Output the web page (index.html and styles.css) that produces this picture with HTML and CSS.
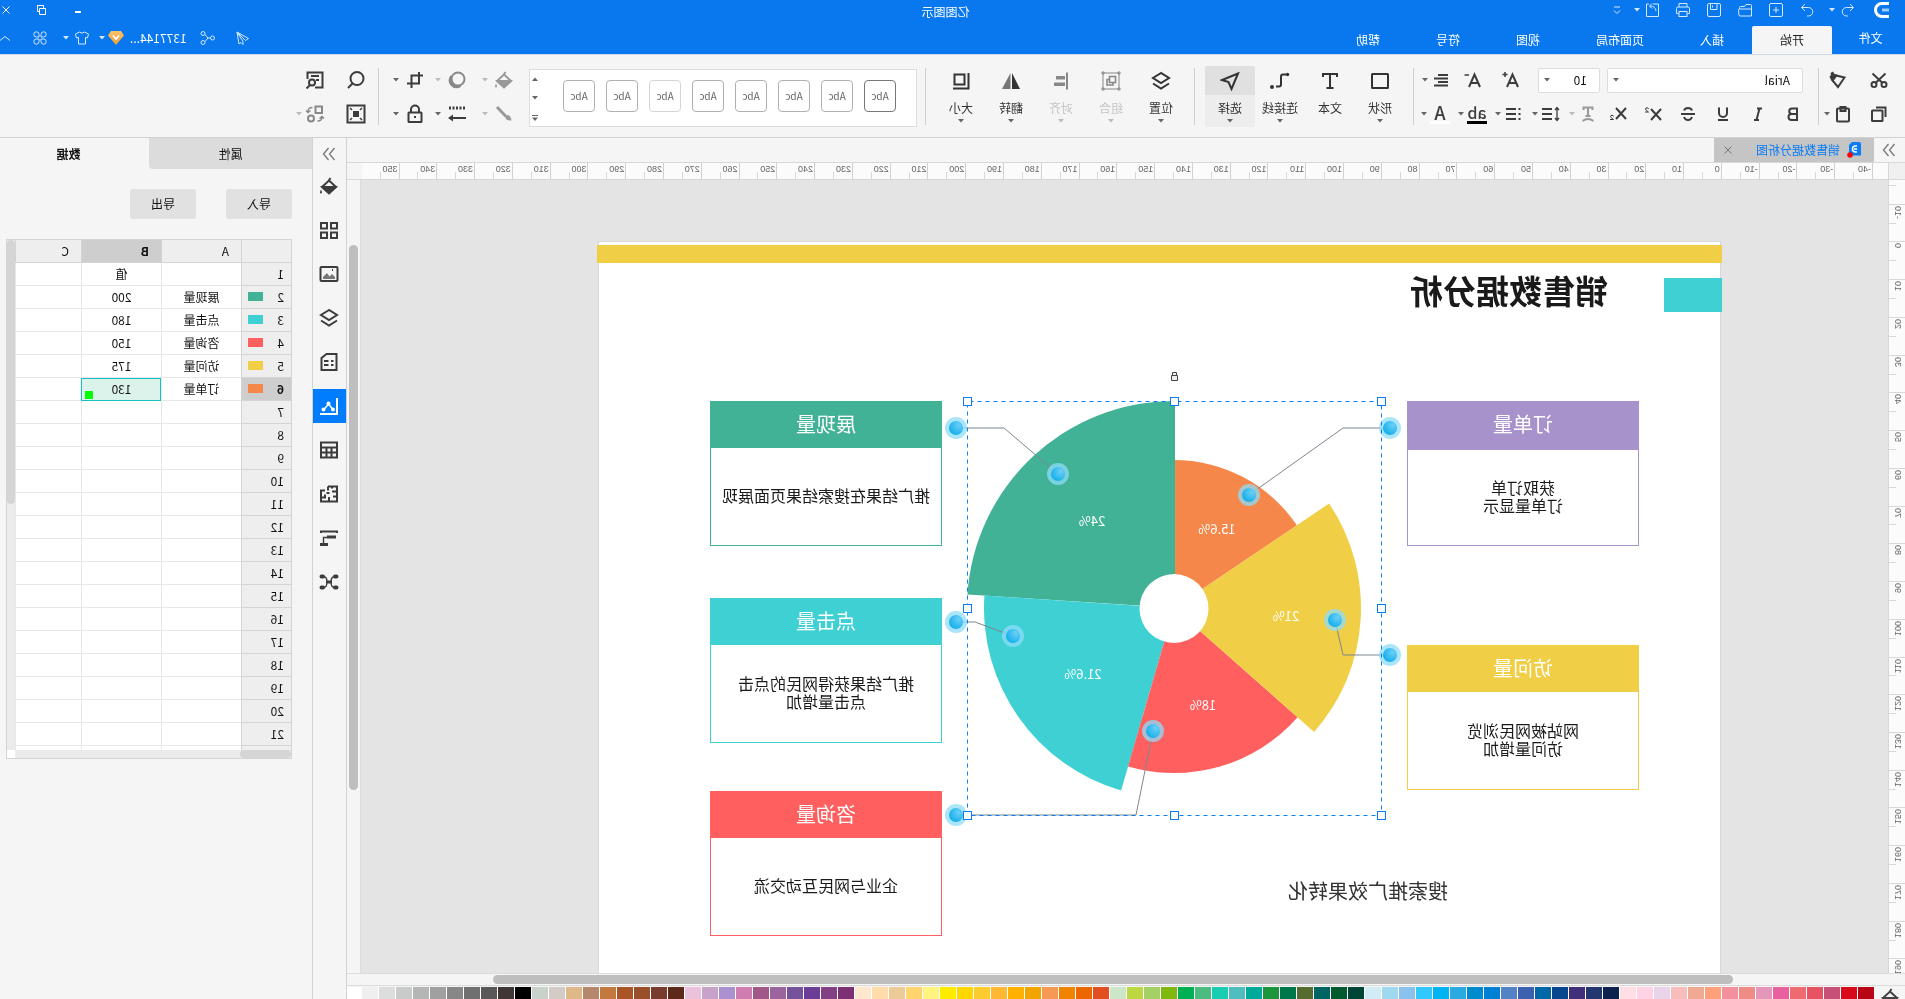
FILE: index.html
```html
<!DOCTYPE html>
<html lang="zh-CN">
<head>
<meta charset="utf-8">
<title>亿图图示</title>
<link rel="stylesheet" href="styles.css">
</head>
<body>
<svg class="defs" aria-hidden="true">
  <defs>
    <radialGradient id="dot" cx="0.3" cy="0.3" r="0.8"><stop offset="0" stop-color="#6ccff6"/><stop offset="1" stop-color="#0fadea"/></radialGradient>
    <linearGradient id="gem" x1="0" y1="0" x2="0" y2="1"><stop offset="0" stop-color="#fbc56a"/><stop offset="1" stop-color="#f29a2e"/></linearGradient>
  </defs>
  <symbol id="i-caret" viewBox="0 0 6 4"><path d="M0 0h6L3 3.6z" fill="currentColor"/></symbol>
  <symbol id="i-undo" viewBox="0 0 16 16"><path d="M6 2 2.500 5.500 6 9M3 5.500h6.500a4 4 0 0 1 0 8.500H8"/></symbol>
  <symbol id="i-redo" viewBox="0 0 16 16"><path d="M10 2l3.500 3.500L10 9M13 5.500H6.500a4 4 0 0 0 0 8.500H8"/></symbol>
  <symbol id="i-new" viewBox="0 0 16 16"><rect x="1.500" y="1.500" width="13" height="13" rx="1.500"/><path d="M8 5v6M5 8h6"/></symbol>
  <symbol id="i-open" viewBox="0 0 16 16"><path d="M1.500 14V3.500q0-1 1-1H7l1.500 2h4q1 0 1 1V7M1.500 14V8q0-1 1-1h11q1.300 0 1 1.200L14 13q-.3 1-1 1z"/></symbol>
  <symbol id="i-save" viewBox="0 0 16 16"><rect x="1.500" y="1.500" width="13" height="13" rx="1.500"/><path d="M5 1.500v6h6.500v-6M9.500 3.500v2"/></symbol>
  <symbol id="i-print" viewBox="0 0 16 16"><path d="M4 5V1.500h8V5M3.500 11.500h-2V6.500q0-1.500 1.500-1.500h10q1.500 0 1.500 1.500v5h-2"/><rect x="4" y="9.500" width="8" height="5"/></symbol>
  <symbol id="i-export" viewBox="0 0 16 16"><path d="M8 2H2.500v12.500h12V2H12M5 9q.5-5 6-5M9 1.500 11.500 4 9 6.500"/></symbol>
  <symbol id="i-more" viewBox="0 0 16 16"><path d="M5 5h6M5 8.500l3 3 3-3"/></symbol>
  <symbol id="i-send" viewBox="0 0 16 16"><path d="M14 2 2.500 8.500l3 2L14 2 8 11.500v3l2-2 2 1.500z"/></symbol>
  <symbol id="i-share" viewBox="0 0 16 16"><circle cx="3.500" cy="8" r="2"/><circle cx="13" cy="3.500" r="2"/><circle cx="13" cy="12.500" r="2"/><path d="M5.500 8H8l3-3.500M8 8l3 3.500"/></symbol>
  <symbol id="i-shirt" viewBox="0 0 16 16"><path d="M5.500 2 1.500 4l1 4 2-.7V14h7V7.300l2 .7 1-4-4-2q-2.500 2.500-5 0z"/></symbol>
  <symbol id="i-clover" viewBox="0 0 16 16"><path d="M7 7H4.200A2.600 2.600 0 1 1 7 4.300zM9 7V4.300A2.600 2.600 0 1 1 11.800 7zM7 9v2.700A2.600 2.600 0 1 1 4.200 9zM9 9h2.800A2.600 2.600 0 1 1 9 11.700z"/></symbol>
  <symbol id="i-up" viewBox="0 0 16 16"><path d="M3 10.500l5-4 5 4"/></symbol>
  <symbol id="i-min" viewBox="0 0 16 16"><path d="M5 10h6" stroke-width="2"/></symbol>
  <symbol id="i-restore" viewBox="0 0 16 16"><path d="M4.500 6.500h6v6h-6zM10.500 9.500h2v-6h-6v3"/></symbol>
  <symbol id="i-close" viewBox="0 0 16 16"><path d="M4.500 4.500l7 7M11.500 4.500l-7 7"/></symbol>
  <symbol id="i-cut" viewBox="0 0 20 20"><circle cx="5" cy="14.500" r="2.500"/><circle cx="15" cy="14.500" r="2.500"/><path d="M3.500 3.500l10 9.500M16.500 3.500 6.500 13"/></symbol>
  <symbol id="i-painter" viewBox="0 0 20 20"><path d="M3.500 7.500 12 5.500l3.500 5L10 17z"/><path d="M10 5l3.500-1 1.500-2.500 2.500 1.500-.5 2 1.500 1.500-1 2.500L15.500 12z" fill="currentColor" stroke="none"/></symbol>
  <symbol id="i-copy" viewBox="0 0 20 20"><rect x="6.500" y="6.500" width="10.500" height="10.500" rx=".5"/><path d="M3.500 13V3.500H13"/></symbol>
  <symbol id="i-paste" viewBox="0 0 20 20"><rect x="4" y="4.500" width="12" height="13" rx="1"/><path d="M7.500 3h5v4h-5z"/></symbol>
  <symbol id="i-fplus" viewBox="0 0 20 20"><path d="M3 17 8.500 4.500 14 17M5 13h7"/><path d="M13.500 4.500h5M16 2v5" stroke-width="1.500"/></symbol>
  <symbol id="i-fminus" viewBox="0 0 20 20"><path d="M3 17 8.500 4.500 14 17M5 13h7"/><path d="M14 5h4.500" stroke-width="1.500"/></symbol>
  <symbol id="i-align" viewBox="0 0 20 20"><path d="M3 5h10M3 8.500h14M3 12h10M3 15.500h14"/></symbol>
  <symbol id="i-b" viewBox="0 0 20 20"><path d="M6 4.500h5a2.500 2.500 0 0 1 0 5.500H6zM6 10h5.500a2.700 2.700 0 0 1 0 6H6z"/></symbol>
  <symbol id="i-i" viewBox="0 0 20 20"><path d="M6 4.500h5M9 16h5M8.500 4.500l3 11.500"/></symbol>
  <symbol id="i-u" viewBox="0 0 20 20"><path d="M6 3.500V9a4 4 0 0 0 8 0V3.500M5 16h10"/></symbol>
  <symbol id="i-s" viewBox="0 0 20 20"><path d="M14 6.500Q13 4 10 4T6 6.500M3 10h14M6 13q1 3 4 3t4-3"/></symbol>
  <symbol id="i-sup" viewBox="0 0 20 20"><path d="M2 5l10 11M12 5 2 16"/><path d="M14.500 5q0-1.200 1.500-1.200T17.500 5q0 1-3 3h3.500" stroke-width="1"/></symbol>
  <symbol id="i-sub" viewBox="0 0 20 20"><path d="M2 4l10 11M12 4 2 15"/><path d="M14.500 12.500q0-1.200 1.500-1.200t1.500 1.200q0 1-3 3h3.500" stroke-width="1"/></symbol>
  <symbol id="i-tarc" viewBox="0 0 20 20"><path d="M5.500 6V3.500h9V6M10 3.500V12M7.500 12h5M4.500 17q5.500-4 11 0"/></symbol>
  <symbol id="i-lines" viewBox="0 0 20 20"><path d="M9 5h10M9 10h10M9 15h10"/><path d="M4 4v12M2 6l2-2.500L6 6M2 14l2 2.500L6 14" stroke-width="1.300"/></symbol>
  <symbol id="i-list" viewBox="0 0 20 20"><path d="M8 5h10M8 10h10M8 15h10M3.500 5h2M3.500 10h2M3.500 15h2"/></symbol>
  <symbol id="i-rect" viewBox="0 0 20 20"><rect x="2" y="3" width="16" height="14" rx=".5"/></symbol>
  <symbol id="i-t" viewBox="0 0 20 20"><path d="M3 6V3h14v3M10 3v14M6.500 17h7"/></symbol>
  <symbol id="i-conn" viewBox="0 0 20 20"><path d="M4 3.500h3q2 0 2 2v8q0 2 2 2h3"/><circle cx="2.500" cy="3.500" r="1.700" fill="currentColor" stroke="none"/><circle cx="18" cy="16" r="2" fill="currentColor" stroke="none"/></symbol>
  <symbol id="i-select" viewBox="0 0 20 20"><path d="M2 2.500 18 9l-6.500 2L8.500 18z"/></symbol>
  <symbol id="i-layers" viewBox="0 0 20 20"><path d="M10 2l8 5-8 5-8-5zM2 12.500l8 5 8-5" /></symbol>
  <symbol id="i-group" viewBox="0 0 20 20"><rect x="2" y="2" width="16" height="16" stroke-width="1"/><path d="M5.500 5.500h6v6h-6zM11.500 8.500H14V14H8v-2.500" stroke-width="1.600"/><path d="M1 1h2v2H1zM17 1h2v2h-2zM1 17h2v2H1zM17 17h2v2h-2z" stroke-width="1"/></symbol>
  <symbol id="i-left" viewBox="0 0 20 20"><path d="M4 1.500v17"/><path d="M6 5h9v3.500H6zM6 11.500h11V15H6z" fill="currentColor" stroke="none"/></symbol>
  <symbol id="i-flip" viewBox="0 0 20 20"><path d="M9 2v16H1z" fill="currentColor" stroke="none"/><path d="M10.500 2v16H19z" fill="#777" stroke="none"/></symbol>
  <symbol id="i-size" viewBox="0 0 20 20"><rect x="6.500" y="3.500" width="10" height="10"/><path d="M2.500 2v15.500H18"/></symbol>
  <symbol id="i-bucket" viewBox="0 0 20 20"><path d="M8.500 2l2 3M10 4.500 3 11l7 6.500 7-6.500z"/><path d="M3.500 11h13L10 17z" fill="currentColor"/><path d="M18 13.500q2 4 0 4t0-4z" fill="currentColor" stroke="none"/></symbol>
  <symbol id="i-brush" viewBox="0 0 20 20"><path d="M17 3l-9 9.500" stroke-width="3"/><path d="M8.500 12 6 11q-3 1-3.500 5.500 4.500.5 6-2z" fill="currentColor" stroke="none"/></symbol>
  <symbol id="i-shadow" viewBox="0 0 20 20"><circle cx="9" cy="9" r="6.500"/><path d="M15.500 6q3.500 4 .5 8.500-4 4.500-9.500 1.500 6 1 8.500-3 2-3.500.5-7z" fill="currentColor"/></symbol>
  <symbol id="i-crop" viewBox="0 0 20 20"><path d="M6 2v11.500h12M2 5.500h11.500V18"/></symbol>
  <symbol id="i-dash" viewBox="0 0 20 20"><path d="M2 4h16" stroke-width="3" stroke-dasharray="2 1.500"/><path d="M1 14h15"/><path d="M14 10.500l5 3.500-5 3.500z" fill="currentColor" stroke="none"/></symbol>
  <symbol id="i-lock" viewBox="0 0 20 20"><rect x="3.500" y="8.500" width="13" height="9.500" rx=".5"/><path d="M6 8.500V5.500a4 4 0 0 1 8 0v3M9 13h2"/></symbol>
  <symbol id="i-search" viewBox="0 0 20 20"><circle cx="9" cy="8.500" r="6.500"/><path d="M13.500 13.500 18 18"/></symbol>
  <symbol id="i-find" viewBox="0 0 20 20"><path d="M10 17.500H2.500v-15h15V9M6 6h8M6 10h3"/><circle cx="13" cy="12.500" r="3"/><path d="M15 15l3.500 3.500"/></symbol>
  <symbol id="i-fit" viewBox="0 0 20 20"><rect x="1.500" y="1.500" width="17" height="17"/><path d="M7 7h6v6H7z" fill="currentColor" stroke="none"/><path d="M4 4l2 2M16 4l-2 2M4 16l2-2M16 16l-2-2" stroke-width="1.500"/></symbol>
  <symbol id="i-replace" viewBox="0 0 20 20"><rect x="3" y="2.500" width="6.500" height="6.500"/><circle cx="14" cy="14.500" r="3"/><path d="M12.500 3.500q4.500 0 4.500 4M14.500 6.500l2.500 2 2-2M7.500 17q-4.500 0-4.500-4M1 14.500l2-2 2.500 2" stroke-width="1.400"/></symbol>
  <symbol id="i-grid" viewBox="0 0 20 20"><path d="M2 3h6v5.500H2zM12 3h6v5.500h-6zM2 12.500h6V18H2zM12 12.500h6V18h-6z"/></symbol>
  <symbol id="i-image" viewBox="0 0 20 20"><rect x="1.500" y="3" width="17" height="14" rx="1"/><path d="M4 15v-2l3-3 2.500 2.500L12 9l4 4v2z" fill="#777" stroke="none"/><path d="M6 6h1"/></symbol>
  <symbol id="i-doc" viewBox="0 0 20 20"><path d="M2.500 2h10L17.500 6v12h-15zM5.500 9h2.500M10.500 9H15M5.500 13H8M10.500 13H15"/></symbol>
  <symbol id="i-chart" viewBox="0 0 20 20"><path d="M2 2v16h17"/><path d="M6 13.500 10.500 8l4.500 5.500" stroke-width="1.500"/><g fill="currentColor" stroke="none"><circle cx="6" cy="13.500" r="2"/><circle cx="10.500" cy="7.500" r="2"/><circle cx="15.500" cy="13.500" r="2"/></g></symbol>
  <symbol id="i-table" viewBox="0 0 20 20"><path d="M2 2.500h16v15H2zM2 7.500h16M2 12.500h16M7.500 7.500v10M12.500 7.500v10"/></symbol>
  <symbol id="i-plan" viewBox="0 0 20 20"><path d="M11 2.500H2v15h16v-11h-4M11 2.500v4M2 7.500h5M7 2.500v2M2 12.500h4M10 17.500V13M9.500 9h3M14 10.500v3h4"/></symbol>
  <symbol id="i-gantt" viewBox="0 0 20 20"><path d="M1 3.500h18M2 5V3M18 5V3"/><path d="M3 9h9M11 16.500h8" stroke-width="3"/><path d="M15.500 15V9.500H12" stroke-width="1.400"/></symbol>
  <symbol id="i-mind" viewBox="0 0 20 20"><path d="M2.500 4.500H4M16 4.500h1.500M2.500 15.500H4M16 15.500h1.500" stroke-width="4" stroke-linecap="round"/><path d="M7 10h6" stroke-width="3"/><path d="M5 5q3 0 3 5t-3 5.500M15 5q-3 0-3 5t3 5.500" stroke-width="1.400"/></symbol>
  <symbol id="i-dbl" viewBox="0 0 20 20"><path d="M4.500 4l5 6-5 6M10.500 4l5 6-5 6" stroke-width="1.300"/></symbol>
</svg>

<div class="app">
  <header class="top">
    <div class="titlebar">
      <div class="quick">
        <svg class="logo" viewBox="0 0 18 16"><path d="M2 1.500h7a6.500 6.500 0 0 1 0 13H2" fill="none" stroke="#fff" stroke-width="3"/><path d="M2 8h7" stroke="#9ccbff" stroke-width="3"/></svg>
        <button class="split first" aria-label="撤销"><svg class="ic s"><use href="#i-undo"/></svg><svg class="caret"><use href="#i-caret"/></svg></button>
        <button class="q" aria-label="重做"><svg class="ic s"><use href="#i-redo"/></svg></button>
        <button class="q" aria-label="新建"><svg class="ic s"><use href="#i-new"/></svg></button>
        <button class="q" aria-label="打开"><svg class="ic s"><use href="#i-open"/></svg></button>
        <button class="q" aria-label="保存"><svg class="ic s"><use href="#i-save"/></svg></button>
        <button class="q" aria-label="打印"><svg class="ic s"><use href="#i-print"/></svg></button>
        <button class="split out" aria-label="导出"><svg class="ic s"><use href="#i-export"/></svg><svg class="caret"><use href="#i-caret"/></svg></button>
        <button class="q narrow" aria-label="自定义"><svg class="ic s"><use href="#i-more"/></svg></button>
      </div>
      <div class="title">亿图图示</div>
      <div class="win">
        <button class="q" aria-label="最小化"><svg class="ic s"><use href="#i-min"/></svg></button>
        <button class="q" aria-label="还原"><svg class="ic s"><use href="#i-restore"/></svg></button>
        <button class="q" aria-label="关闭"><svg class="ic s"><use href="#i-close"/></svg></button>
      </div>
    </div>
    <div class="menubar">
      <nav class="menus">
        <button class="file">文件</button><button class="active">开始</button><button>插入</button><button>页面布局</button><button>视图</button><button>符号</button><button>帮助</button>
      </nav>
      <div class="account">
        <button class="q" aria-label="发送"><svg class="ic s"><use href="#i-send"/></svg></button>
        <button class="q" aria-label="分享"><svg class="ic s"><use href="#i-share"/></svg></button>
        <button class="user">1377144...<svg class="gem" viewBox="0 0 16 14"><path d="M3 0h10l3 4.500L8 14 0 4.500z" fill="url(#gem)"/><path d="M5 4.500 8 8l3-3.500" fill="none" stroke="#fff" stroke-width="1.800"/></svg><svg class="caret"><use href="#i-caret"/></svg></button>
        <button class="split" aria-label="皮肤"><svg class="ic s"><use href="#i-shirt"/></svg><svg class="caret"><use href="#i-caret"/></svg></button>
        <button class="q" aria-label="应用"><svg class="ic s"><use href="#i-clover"/></svg></button>
        <button class="q" aria-label="收起"><svg class="ic s"><use href="#i-up"/></svg></button>
      </div>
    </div>
  </header>

  <section class="ribbon">
    <div class="rows clip">
      <div class="row"><button class="b" aria-label="剪切"><svg class="ic"><use href="#i-cut"/></svg></button><button class="b" aria-label="格式刷"><svg class="ic"><use href="#i-painter"/></svg></button></div>
      <div class="row"><button class="b" aria-label="复制"><svg class="ic"><use href="#i-copy"/></svg></button><button class="split" aria-label="粘贴"><svg class="ic"><use href="#i-paste"/></svg><svg class="caret"><use href="#i-caret"/></svg></button></div>
    </div>
    <div class="sep"></div>
    <div class="rows font">
      <div class="row">
        <span class="combo family"><select aria-label="字体"><option>Arial</option></select><svg class="caret"><use href="#i-caret"/></svg></span>
        <span class="combo size"><select aria-label="字号"><option>10</option></select><svg class="caret"><use href="#i-caret"/></svg></span>
        <button class="b w" aria-label="增大字号"><svg class="ic"><use href="#i-fplus"/></svg></button><button class="b w" aria-label="减小字号"><svg class="ic"><use href="#i-fminus"/></svg></button><button class="split" aria-label="对齐方式"><svg class="ic"><use href="#i-align"/></svg><svg class="caret"><use href="#i-caret"/></svg></button>
      </div>
      <div class="row">
        <button class="b" aria-label="粗体"><svg class="ic"><use href="#i-b"/></svg></button><button class="b" aria-label="斜体"><svg class="ic"><use href="#i-i"/></svg></button><button class="b" aria-label="下划线"><svg class="ic"><use href="#i-u"/></svg></button><button class="b" aria-label="删除线"><svg class="ic"><use href="#i-s"/></svg></button><button class="b" aria-label="上标"><svg class="ic"><use href="#i-sup"/></svg></button><button class="b" aria-label="下标"><svg class="ic"><use href="#i-sub"/></svg></button>
        <button class="split dim" aria-label="弧形文字"><svg class="ic"><use href="#i-tarc"/></svg><svg class="caret"><use href="#i-caret"/></svg></button><button class="split" aria-label="行距"><svg class="ic"><use href="#i-lines"/></svg><svg class="caret"><use href="#i-caret"/></svg></button><button class="split" aria-label="项目符号"><svg class="ic"><use href="#i-list"/></svg><svg class="caret"><use href="#i-caret"/></svg></button><button class="split"><span class="glyph hl">ab</span><svg class="caret"><use href="#i-caret"/></svg></button><button class="split"><span class="glyph col">A</span><svg class="caret"><use href="#i-caret"/></svg></button>
      </div>
    </div>
    <div class="sep"></div>
    <div class="tools">
      <button class="tool"><svg class="ic"><use href="#i-rect"/></svg><span>形状</span><svg class="caret"><use href="#i-caret"/></svg></button>
      <button class="tool"><svg class="ic"><use href="#i-t"/></svg><span>文本</span></button>
      <button class="tool"><svg class="ic"><use href="#i-conn"/></svg><span>连接线</span><svg class="caret"><use href="#i-caret"/></svg></button>
      <button class="tool on"><svg class="ic"><use href="#i-select"/></svg><span>选择</span><svg class="caret"><use href="#i-caret"/></svg></button>
    </div>
    <div class="sep"></div>
    <div class="tools">
      <button class="tool"><svg class="ic"><use href="#i-layers"/></svg><span>位置</span><svg class="caret"><use href="#i-caret"/></svg></button>
      <button class="tool dim"><svg class="ic"><use href="#i-group"/></svg><span>组合</span><svg class="caret"><use href="#i-caret"/></svg></button>
      <button class="tool dim"><svg class="ic"><use href="#i-left"/></svg><span>对齐</span><svg class="caret"><use href="#i-caret"/></svg></button>
      <button class="tool"><svg class="ic"><use href="#i-flip"/></svg><span>翻转</span><svg class="caret"><use href="#i-caret"/></svg></button>
      <button class="tool"><svg class="ic"><use href="#i-size"/></svg><span>大小</span><svg class="caret"><use href="#i-caret"/></svg></button>
    </div>
    <div class="sep"></div>
    <div class="gallery">
      <button class="style s1">Abc</button><button class="style">Abc</button><button class="style">Abc</button><button class="style">Abc</button><button class="style">Abc</button><button class="style s2">Abc</button><button class="style">Abc</button><button class="style">Abc</button>
      <div class="pager">
        <svg class="caret flip"><use href="#i-caret"/></svg><svg class="caret"><use href="#i-caret"/></svg><svg class="expand" viewBox="0 0 6 6"><path d="M0 0h6v1H0zM0 2.500h6L3 6z" fill="currentColor"/></svg>
      </div>
    </div>
    <div class="rows effects">
      <div class="row"><button class="split far dim" aria-label="填充"><svg class="ic"><use href="#i-bucket"/></svg><svg class="caret"><use href="#i-caret"/></svg></button><button class="split far grey" aria-label="阴影"><svg class="ic"><use href="#i-shadow"/></svg><svg class="caret"><use href="#i-caret"/></svg></button><button class="split far" aria-label="裁剪"><svg class="ic"><use href="#i-crop"/></svg><svg class="caret"><use href="#i-caret"/></svg></button></div>
      <div class="row"><button class="split far dim" aria-label="画笔"><svg class="ic"><use href="#i-brush"/></svg><svg class="caret"><use href="#i-caret"/></svg></button><button class="split far" aria-label="线条"><svg class="ic"><use href="#i-dash"/></svg><svg class="caret"><use href="#i-caret"/></svg></button><button class="split far" aria-label="锁定"><svg class="ic"><use href="#i-lock"/></svg><svg class="caret"><use href="#i-caret"/></svg></button></div>
    </div>
    <div class="sep"></div>
    <div class="rows find">
      <div class="row"><button class="split" aria-label="搜索"><svg class="ic"><use href="#i-search"/></svg></button><button class="split" aria-label="查找替换"><svg class="ic"><use href="#i-find"/></svg></button></div>
      <div class="row"><button class="split" aria-label="适应"><svg class="ic"><use href="#i-fit"/></svg></button><button class="split grey" aria-label="替换形状"><svg class="ic"><use href="#i-replace"/></svg><svg class="caret"><use href="#i-caret"/></svg></button></div>
    </div>
  </section>

  <div class="work">
    <main class="editor">
      <div class="doctabs">
        <button class="expandlib" aria-label="展开"><svg class="ic"><use href="#i-dbl"/></svg></button>
        <div class="doctab">
          <svg class="docicon" viewBox="0 0 14 18"><path d="M2 1h7l3 3v10.500H0V3q0-2 2-2z" fill="#0a7cf8"/><path d="M4 5h1.500a3 3 0 0 1 0 6H4M4 8h3" fill="none" stroke="#fff" stroke-width="1.500"/><circle cx="11" cy="14" r="2.800" fill="#f00"/></svg>
          <span>销售数据分析图</span>
          <button aria-label="关闭标签"><svg class="ic s"><use href="#i-close"/></svg></button>
        </div>
      </div>
      <div class="hruler"><div class="corner"></div><div class="hticks" id="hticks"></div><div class="corner end"></div></div>
      <div class="stage">
        <div class="vruler"><div class="vticks" id="vticks"></div></div>
        <div class="canvas">
          <div class="page">
            <div class="bar"></div>
            <div class="block"></div>
            <h1>销售数据分析</h1>
            <p class="sub">搜索推广效果转化</p>
            <div class="card order"><h2>订单量</h2><p>获取订单<br>订单量显示</p></div>
            <div class="card visit"><h2>访问量</h2><p>网站被网民浏览<br>访问量增加</p></div>
            <div class="card show"><h2>展现量</h2><p>推广结果在搜索结果页面展现</p></div>
            <div class="card click"><h2>点击量</h2><p>推广结果获得网民的点击<br>点击量增加</p></div>
            <div class="card ask"><h2>咨询量</h2><p>企业与网民互动交流</p></div>
            <svg class="chart" viewBox="500 360 460 480">
              <path fill="#42b297" d="M730 608V401A207 207 0 0 1 937.600 594.400z"/>
              <path fill="#3fd0d4" d="M731 608 920.600 595.500A190 190 0 0 1 783.900 790.500z"/>
              <path fill="#ff5f5f" d="M731 608 777 766.500A165 165 0 0 1 607.400 717.300z"/>
              <path fill="#f0ce45" d="M731 608 590.900 731.900A187 187 0 0 1 575.900 503.600z"/>
              <path fill="#f6874a" d="M731 608 608.200 525.300A148 148 0 0 1 731 460z"/>
              <path fill="#42b297" d="M730 608V401h2v207z"/>
              <circle cx="731" cy="608.500" r="34.500" fill="#fff"/>
              <g class="pct"><text x="813" y="526">24%</text><text x="688" y="534">15.6%</text><text x="619" y="621">21%</text><text x="702" y="710">18%</text><text x="822" y="679">21.6%</text></g>
              <g class="leads"><path d="M949 428H901L847 474"/><path d="M515 428h47l94 67"/><path d="M949 622h-19l-38 14"/><path d="M515 655h47l8-35"/><path d="M949 815H769l-17-84"/></g>
              <g class="halo"><circle cx="949" cy="428" r="11"/><circle cx="847" cy="474" r="11"/><circle cx="515" cy="428" r="11"/><circle cx="656" cy="495" r="11"/><circle cx="949" cy="622" r="11"/><circle cx="892" cy="636" r="11"/><circle cx="570" cy="620" r="11"/><circle cx="515" cy="655" r="11"/><circle cx="949" cy="815" r="11"/><circle cx="752" cy="731" r="11"/></g>
              <g class="core"><circle cx="949" cy="428" r="7"/><circle cx="847" cy="474" r="7"/><circle cx="515" cy="428" r="7"/><circle cx="656" cy="495" r="7"/><circle cx="949" cy="622" r="7"/><circle cx="892" cy="636" r="7"/><circle cx="570" cy="620" r="7"/><circle cx="515" cy="655" r="7"/><circle cx="949" cy="815" r="7"/><circle cx="752" cy="731" r="7"/></g>
              <rect class="sel" x="523.500" y="401.500" width="414" height="414"/>
              <g class="grip"><rect x="519.500" y="397.500" width="8" height="8"/><rect x="726.500" y="397.500" width="8" height="8"/><rect x="933.500" y="397.500" width="8" height="8"/><rect x="519.500" y="604.500" width="8" height="8"/><rect x="933.500" y="604.500" width="8" height="8"/><rect x="519.500" y="811.500" width="8" height="8"/><rect x="726.500" y="811.500" width="8" height="8"/><rect x="933.500" y="811.500" width="8" height="8"/></g>
              <path d="M727.500 375.500h6v5h-6zM728.500 375v-2.500h4v2.500" fill="#eee" stroke="#444"/>
            </svg>
          </div>
        </div>
        <div class="vscroll"><div class="thumb"></div></div>
      </div>
      <div class="hscroll"><div class="track"><div class="thumb"></div></div></div>
      <div class="palette"><div class="pick"><svg class="ic"><use href="#i-bucket"/></svg></div><div class="colors" id="colors"></div></div>
    </main>

    <aside class="side">
      <button aria-label="收起面板" class="muted"><svg class="ic"><use href="#i-dbl"/></svg></button>
      <button aria-label="填充"><svg class="ic"><use href="#i-bucket"/></svg></button>
      <button aria-label="符号"><svg class="ic"><use href="#i-grid"/></svg></button>
      <button aria-label="图片"><svg class="ic"><use href="#i-image"/></svg></button>
      <button aria-label="图层"><svg class="ic"><use href="#i-layers"/></svg></button>
      <button aria-label="页面"><svg class="ic"><use href="#i-doc"/></svg></button>
      <button aria-label="图表" class="on"><svg class="ic"><use href="#i-chart"/></svg></button>
      <button aria-label="表格"><svg class="ic"><use href="#i-table"/></svg></button>
      <button aria-label="平面图"><svg class="ic"><use href="#i-plan"/></svg></button>
      <button aria-label="甘特图"><svg class="ic"><use href="#i-gantt"/></svg></button>
      <button aria-label="思维导图"><svg class="ic"><use href="#i-mind"/></svg></button>
    </aside>

    <section class="panel">
      <div class="ptabs"><button>属性</button><button class="on">数据</button></div>
      <div class="actions"><button>导入</button><button>导出</button></div>
      <div class="sheet">
        <div class="cells">
          <table>
            <colgroup><col class="cn"><col class="cw"><col class="cw"><col></colgroup>
            <thead><tr><th></th><th>A</th><th class="cur">B</th><th>C</th></tr></thead>
            <tbody id="rows"></tbody>
          </table>
        </div>
        <div class="sv"><div class="thumb"></div></div>
        <div class="sh"><div class="thumb"></div></div>
        <div class="blank"></div>
      </div>
    </section>
  </div>
</div>
<script src="app.js"></script>
</body>
</html>
```

FILE: styles.css
```css
* { box-sizing: border-box; }
body { margin: 0; font-family: "Noto Sans CJK SC", "Noto Sans", sans-serif; font-size: 12px; line-height: 16px; color: #333; overflow: hidden; }
button { border: 0; padding: 0; margin: 0; background: none; font: inherit; color: inherit; display: flex; align-items: center; justify-content: center; }
h1, h2, p { margin: 0; font-weight: 400; }
.defs { position: absolute; width: 0; height: 0; }

/* The whole interface is shown mirrored. */
.app { height: 100vh; display: flex; flex-direction: column; transform: scaleX(-1); background: #f5f5f5; }

.ic { width: 20px; height: 20px; flex: none; fill: none; stroke: currentColor; stroke-width: 2; }
.ic.s { width: 16px; height: 16px; stroke-width: 1; }
.caret { width: 6px; height: 4px; flex: none; color: #666; }
.split { width: 37px; padding-left: 3px; justify-content: flex-start; gap: 3px; height: 24px; }
.split.far { width: 47px; gap: 6px; }
.dim { color: #999; }
.dim .caret { color: #bbb; }
.grey { color: #888; }
.grey .caret { color: #bbb; }

.top { background: #0978ee; color: #fff; height: 55px; flex: none; border-bottom: 1px solid #cfdae6; }
.titlebar { display: grid; grid-template-columns: 1fr auto 1fr; height: 24px; padding-left: 14px; }
.quick { display: flex; align-items: center; height: 20px; color: #d5e8fd; }
.logo { width: 18px; height: 16px; }
.q { width: 31px; height: 20px; }
.q.narrow { width: 24px; }
.top .split { height: 20px; width: 37px; padding-left: 5px; gap: 5px; }
.top .caret { color: #d5e8fd; }
.top .split.first { margin-left: 12px; width: 38px; }
.top .split.out { margin-left: 2px; }
.title { line-height: 24px; }
.win { display: flex; justify-content: flex-end; height: 20px; margin-right: -12px; }
.win .q { width: 36px; }
.menubar { display: flex; justify-content: space-between; height: 30px; }
.menus { display: flex; padding-top: 2px; }
.menus button { padding: 0 28px; height: 28px; }
.menus .file { width: 73px; padding: 0 4px 4px 0; }
.menus .active { background: #f5f5f5; color: #222; border-radius: 2px 2px 0 0; }
.account { display: flex; align-items: center; height: 28px; color: #d5e8fd; margin-right: -12px; }
.account .q { width: 35px; }
.user { gap: 3px; color: #fff; padding: 0 4px; }
.gem { width: 16px; height: 14px; margin-left: 3px; }

.ribbon { height: 83px; flex: none; display: flex; align-items: center; border-bottom: 1px solid #d2d2d2; color: #3c3c3c; }
.sep { width: 1px; height: 57px; background: #cdcdcd; margin-right: 8px; flex: none; }
.rows { display: flex; flex-direction: column; gap: 9px; padding-top: 2px; flex: none; }
.row { display: flex; align-items: center; height: 25px; }
.b { width: 35px; height: 24px; }
.b.w { width: 38px; }
.clip { padding-left: 8px; }
.clip .row { gap: 6px; }
.font { padding-right: 2px; }
.font .row:first-child { padding-left: 8px; }
.combo { display: flex; align-items: center; height: 25px; background: #fff; border: 1px solid #ddd; border-radius: 2px; padding-right: 5px; }
.combo select { flex: 1; min-width: 0; appearance: none; border: 0; background: none; font: inherit; color: #111; padding: 0 0 0 12px; }
.combo.family { width: 196px; margin-right: 7px; }
.combo.size { width: 62px; margin-right: 8px; }
.glyph { width: 20px; height: 19px; font-size: 16px; line-height: 14px; text-align: center; border-bottom: 3px solid #000; font-weight: 500; }
.glyph.col { border-color: #fff; font-size: 18px; }
.clip + .sep { margin-right: 7px; }
.tools { display: flex; padding-right: 10px; flex: none; }
.tool { width: 50px; height: 61px; flex-direction: column; justify-content: flex-start; padding-top: 5px; color: #333; }
.tool span { margin: 8px 0 2px; line-height: 18px; }
.tool.dim { color: #888; }
.tool.dim span { color: #c4c4c4; }
.tool.on { background: linear-gradient(#e0e0e0 29px, #ededed 29px); border-radius: 2px; }
.gallery { display: flex; gap: 11px; width: 388px; height: 58px; flex: none; background: #fff; border: 1px solid #ddd; margin-top: 3px; padding: 10px 0 0 20px; }
.style { width: 32px; height: 32px; border: 1px solid #b0b0b0; border-radius: 4px; font-size: 10px; color: #666; flex: none; }
.style.s1 { border-color: #777; }
.style.s2 { border-color: #d5d5d5; }
.pager { display: flex; flex-direction: column; justify-content: space-between; height: 44px; margin: -3px 0 0 14px; }
.expand { width: 6px; height: 6px; color: #666; }
.flip { transform: rotate(180deg); }
.effects { padding-left: 12px; }
.effects .split:nth-child(2) { width: 42px; }
.effects + .sep { margin: 0 9px 0 2px; }
.find .split:first-child { width: 41px; }

.work { flex: 1; min-height: 0; display: flex; }
.editor { flex: 1; min-width: 0; display: flex; flex-direction: column; }
.doctabs { height: 24px; display: flex; flex: none; }
.expandlib { width: 31px; color: #777; }
.doctab { width: 160px; background: #c5c5c5; display: flex; align-items: center; padding: 0 6px 0 13px; color: #0a7cf8; }
.doctab span { margin-left: 7px; flex: 1; }
.docicon { width: 14px; height: 18px; }
.doctab button { color: #777; }
.hruler { height: 18px; flex: none; display: flex; border: solid #d8d8d8; border-width: 1px 0; background: #fbfbfb; }
.corner { width: 17px; background: #f0f0f0; border-right: 1px solid #d8d8d8; flex: none; }
.corner.end { width: 15px; border: 0; background: #f5f5f5; }
.hticks { flex: 1; display: flex; padding-left: 15px; }
.hticks span, .vticks span { flex: 1 1 0; min-width: 0; min-height: 0; font-family: "Liberation Sans", sans-serif; font-size: 9px; line-height: 12px; color: #666; }
.hticks span { border-left: 1px solid #d0d0d0; padding-left: 1px; background: linear-gradient(#d8d8d8, #d8d8d8) 50% 100% / 1px 7px no-repeat; }
.stage { flex: 1; min-height: 0; display: flex; }
.vruler { width: 17px; flex: none; background: #fbfbfb; border-right: 1px solid #d8d8d8; overflow: hidden; }
.vticks { height: 830px; margin-top: -14px; display: flex; flex-direction: column; }
.vticks span { border-top: 1px solid #d8d8d8; background: linear-gradient(#d8d8d8, #d8d8d8) 100% 50% / 7px 1px no-repeat; }
.vticks b { display: block; font-weight: 400; writing-mode: vertical-rl; transform: rotate(180deg); line-height: 12px; margin: 1px 0 0 1px; width: 12px; }
.canvas { flex: 1; min-width: 0; position: relative; overflow: hidden; background: #e4e4e4; }
.vscroll { width: 14px; flex: none; padding: 65px 2px 0; border-left: 1px solid #dcdcdc; }
.vscroll .thumb { height: 545px; background: #bebebe; border-radius: 5px; }
.hscroll { height: 13px; flex: none; border: solid #dcdcdc; border-width: 1px 0; padding: 1px 14px 1px 0; background: #f5f5f5; }
.hscroll .track { height: 9px; padding: 0 132px 0 172px; }
.hscroll .thumb { height: 9px; background: #bebebe; border-radius: 5px; }
.palette { height: 13px; flex: none; display: flex; overflow: hidden; padding-top: 1px; }
.pick { width: 31px; flex: none; padding-left: 5px; color: #444; }
.colors { flex: 1; min-width: 0; display: flex; gap: 1px; overflow: hidden; background: #fff; }
.colors i { width: 16px; height: 12px; flex: none; }

/* Drawing page */
.page { position: absolute; left: 167px; top: 61px; width: 1123px; height: 794px; background: #fff; border: 1px solid #d8d8d8; }
.page > * { position: absolute; }
.bar { left: -2px; right: -2px; top: 3px; height: 18px; background: #f0ce45; }
.block { left: -2px; top: 36px; width: 58px; height: 34px; background: #3fd0d4; }
.page h1 { left: 112px; top: 28px; font-size: 33px; line-height: 40px; font-weight: 700; color: #1a1a1a; }
.sub { left: 272px; top: 635px; font-size: 20px; line-height: 28px; color: #333; }
.card { width: 232px; height: 145px; border: 1px solid var(--c); display: flex; flex-direction: column; text-align: center; }
.card h2 { background: var(--c); color: #fff; height: 46px; font-size: 20px; line-height: 43px; }
.card p { flex: 1; display: grid; place-content: center; font-size: 16px; line-height: 18px; color: #1a1a1a; padding-bottom: 4px; }
.order, .visit { left: 81px; }
.show, .click, .ask { left: 778px; }
.order { --c: #a892cb; top: 159px; }
.order h2 { height: 48px; }
.visit { --c: #f0ce45; top: 403px; }
.show { --c: #42b297; top: 159px; }
.click { --c: #3fd0d4; top: 356px; }
.ask { --c: #ff5f5f; top: 549px; }
.chart { left: 315px; top: 118px; width: 460px; height: 480px; }
.pct text { font-size: 13px; fill: #fff; text-anchor: middle; }
.leads path { fill: none; stroke: #7d8790; }
.halo circle { fill: #8edcf8; fill-opacity: 0.75; }
.core circle { fill: url(#dot); }
.sel { fill: none; stroke: #0a7cf8; stroke-dasharray: 4 4; }
.grip rect { fill: #fff; stroke: #0a7cf8; }

.side { width: 34px; flex: none; border: solid #d2d2d2; border-width: 0 1px 0 0; display: flex; flex-direction: column; gap: 10px; color: #3c3c3c; }
.editor { border-right: 1px solid #d2d2d2; }
.side button { height: 34px; }
.side .on { background: #007dff; color: #fff; }
.side .muted { color: #777; height: 31px; margin-bottom: -10px; }

.panel { width: 312px; flex: none; }
.ptabs { display: flex; color: #111; }
.ptabs button { height: 31px; width: 163px; background: #dcdcdc; border-radius: 0 0 4px 0; }
.ptabs .on { flex: 1; background: none; font-weight: 700; padding: 0 0 0 12px; }
.actions { display: flex; gap: 30px; padding: 20px 20px; }
.actions button { width: 66px; height: 30px; background: #e1e1e1; border-radius: 3px; color: #111; }
.sheet { margin: 0 6px 0 20px; height: 520px; border: 1px solid #d4d4d4; display: grid; grid-template: 1fr 8px / 1fr 8px; }
.cells { overflow: hidden; background: #fff; }
table { width: 100%; border-collapse: separate; border-spacing: 0; table-layout: fixed; color: #111; }
.cn { width: 50px; }
.cw { width: 80px; }
th, td { height: 23px; padding: 0; border: solid #e8e8e8; border-width: 0 1px 1px 0; text-align: center; font-weight: 400; line-height: 16px; }
th { background: #eee; border-color: #d4d4d4; text-align: left; padding-left: 12px; }
tbody th { padding-left: 7px; }
tbody th i { float: right; width: 15px; height: 9px; margin: 3px 6px 0 0; }
th.cur { background: #cecece; font-weight: 700; }
td.pick-cell { background: #dcf3ec; outline: 1px solid #14c0c4; outline-offset: -1px; position: relative; }
td.pick-cell::after { content: ""; position: absolute; right: 3px; bottom: 1px; width: 8px; height: 8px; background: #0f0; }
.sv, .sh { background: #ebebeb; }
.sv .thumb { height: 264px; background: #d5d5d5; border-radius: 4px; }
.sh .thumb { width: 51px; height: 8px; background: #d5d5d5; border-radius: 4px; }
.blank { background: #fff; }
```

FILE: app.js
```js
const byId = id => document.getElementById(id);

byId("hticks").innerHTML = Array.from({ length: 40 }, (_, i) => `<span>${(i - 4) * 10}</span>`).join("");
byId("vticks").innerHTML = Array.from({ length: 22 }, (_, i) => `<span>${i ? `<b>${(i - 2) * 10}</b>` : ""}</span>`).join("");

const colors = `b80516 d9091c c75078 e85364 ec6a70 e9609f e497b9 ef8c86 f2909d ffa07a f0a993 f6bdba ead4e9 ffd3e5 ffdfe5
0d214f 22366f 432e7a 08478d 0068a7 3c62af 5283c5 0080d4 008bcf 2baae2 00b3f3 31c8fc 89c2ec a0d8ef d1ebf7
004536 005a2f 006562 556b2f 00774a 1c963d 00aa9b 50bdc1 18cdb0 4cbb80 00b052 7fb910 a4d065 bdd740 cce7c8
e34e20 ed6700 f08300 f59a55 f2a500 ffb000 ffb833 fccb30 ffd700 ffeb00 fff47f ffd36e ebcc99 ffdcaa fde8cf
7d3073 844084 6a3e97 755299 9b649f a15888 cf7cb0 ab91cf c7a3c9 ecc1db
5d2a1a 783c2e 984f2a aa5526 c3783e b5876c deb887 d3cbc5 c9d2ca
000000 3f3635 5a5858 717070 888787 a0a0a0 b4b5b5 c9caca dcdddd efefef ffffff`.split(/\s+/);
byId("colors").innerHTML = colors.map(c => `<i style="background:#${c}"></i>`).join("");

const data = [
  ["", "值"],
  ["展现量", "200", "#42b297"],
  ["点击量", "180", "#3fd0d4"],
  ["咨询量", "150", "#ff5f5f"],
  ["访问量", "175", "#f0ce45"],
  ["订单量", "130", "#f6874a"]
];
byId("rows").innerHTML = Array.from({ length: 22 }, (_, i) => {
  const [name = "", value = "", color] = data[i] || [];
  const chip = color ? `<i style="background:${color}"></i>` : "";
  const current = i === 5;
  const label = i < 21 ? i + 1 : "";
  return `<tr><th class="${current ? "cur" : ""}">${chip}${label}</th><td>${name}</td><td class="${current ? "pick-cell" : ""}">${value}</td><td></td></tr>`;
}).join("");
```
